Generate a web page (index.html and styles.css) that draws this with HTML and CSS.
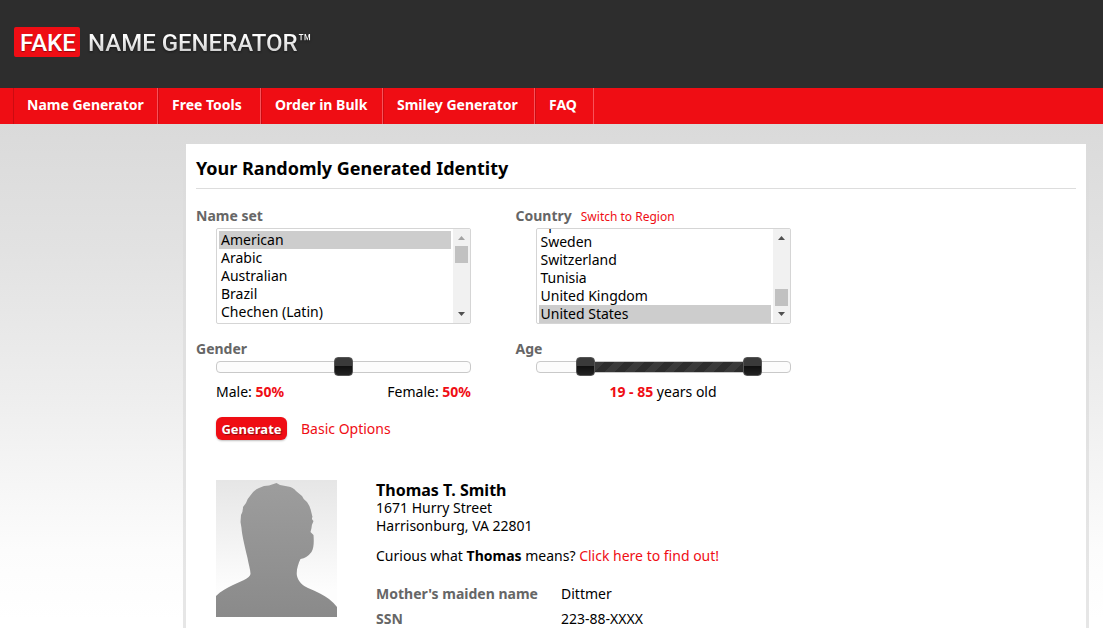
FILE: index.html
```html
<!DOCTYPE html>
<html lang="en">

<head>
    <meta charset="UTF-8">
    <meta name="viewport" content="width=device-width, initial-scale=1.0">
    <title>Fake Name Generator</title>
    <link rel="stylesheet" href="styles.css">
</head>

<body>
    <header>
        <a class="logo">
            <span class="logo-box"><span class="fake">FAKE</span></span>
            <span class="logo-text">NAME GENERATOR<span class="tm">™</span></span>
        </a>
    </header>
    <nav>
        <ul>
            <li class="nav-names"><a>Name Generator</a></li>
            <li class="nav-tools"><a>Free Tools</a></li>
            <li class="nav-bulk"><a>Order in Bulk</a></li>
            <li class="nav-smiley"><a>Smiley Generator</a></li>
            <li class="nav-faq"><a>FAQ</a></li>
        </ul>
    </nav>

    <main>
        <h1><span>Your Randomly Generated Identity</span></h1>

        <form class="options">
            <div class="option">
                <div class="label"><span class="l-nameset">Name set</span></div>
                <div class="listbox">
                    <ul>
                        <li class="selected">American</li>
                        <li>Arabic</li>
                        <li>Australian</li>
                        <li>Brazil</li>
                        <li>Chechen (Latin)</li>
                    </ul>
                    <div class="scrollbar">
                        <svg class="arrow disabled" viewBox="0 0 7 4"><path d="M0 4 3.5 0 7 4z"/></svg>
                        <div class="thumb"></div>
                        <svg class="arrow" viewBox="0 0 7 4"><path d="M0 0 3.5 4 7 0z"/></svg>
                    </div>
                </div>
            </div>
            <div class="option">
                <div class="label"><span class="l-country">Country</span><a class="region">Switch to Region</a></div>
                <div class="listbox scrolled">
                    <ul>
                        <li>Spain</li>
                        <li>Sweden</li>
                        <li>Switzerland</li>
                        <li>Tunisia</li>
                        <li>United Kingdom</li>
                        <li class="selected">United States</li>
                    </ul>
                    <div class="scrollbar">
                        <svg class="arrow" viewBox="0 0 7 4"><path d="M0 4 3.5 0 7 4z"/></svg>
                        <div class="thumb"></div>
                        <svg class="arrow" viewBox="0 0 7 4"><path d="M0 0 3.5 4 7 0z"/></svg>
                    </div>
                </div>
            </div>
            <div class="option">
                <div class="label"><span class="l-gender">Gender</span></div>
                <div class="slider">
                    <div class="handle middle"></div>
                </div>
                <div class="values">
                    <span class="v-male">Male: <b>50%</b></span>
                    <span class="v-female">Female: <b>50%</b></span>
                </div>
            </div>
            <div class="option">
                <div class="label"><span class="l-age">Age</span></div>
                <div class="slider">
                    <div class="range"></div>
                    <div class="handle min"></div>
                    <div class="handle max"></div>
                </div>
                <div class="values center">
                    <span class="v-age"><b>19 - 85</b> years old</span>
                </div>
            </div>
        </form>

        <div class="actions">
            <button type="button"><span>Generate</span></button>
            <a class="basic">Basic Options</a>
        </div>

        <div class="identity">
            <svg class="photo" viewBox="0 0 121 137">
                <defs>
                    <linearGradient id="photoBg" x1="0" y1="0" x2="0" y2="1">
                        <stop offset="0" stop-color="#e6e6e6"/>
                        <stop offset=".8" stop-color="#fdfdfd"/>
                    </linearGradient>
                    <linearGradient id="photoHead" x1="0" y1="0" x2="0" y2="1">
                        <stop offset="0" stop-color="#9d9d9d"/>
                        <stop offset="1" stop-color="#8a8a8a"/>
                    </linearGradient>
                </defs>
                <rect width="121" height="137" fill="url(#photoBg)"/>
                <path fill="url(#photoHead)" d="M0 116C5 111 11 108 17 105L28 100Q34 97 34.500 94C34.500 90 32.500 84 31.500 78C28 63 26 55 25.500 48L24.500 42L25 35Q27 32 27 27L30 23Q31 19 34 16Q38 10 43 8L48 6L53 5.500L60.500 3L64 5L72 6.500Q77 7 80 11L86 16Q87 19 91 22Q94 26 95 31L96.500 37Q95 39 97.500 41Q95.500 45 95.500 48L94.500 52L97.500 55C98 61 98 68 95.500 72Q91 78 84.500 79C82 84 80 91 81 96C82 101 87 106 92 108C101 112 108 115 113 119Q118 123 121 127V137H0z"/>
            </svg>
            <div class="info">
                <div class="address">
                    <h3><span>Thomas T. Smith</span></h3>
                    <div class="adr"><span class="street">1671 Hurry Street</span><br><span class="city">Harrisonburg, VA 22801</span></div>
                </div>
                <p class="curious">Curious what <b>Thomas</b> means? <a>Click here to find out!</a></p>
                <dl>
                    <dt class="maiden">Mother's maiden name</dt>
                    <dd>Dittmer</dd>
                </dl>
                <dl>
                    <dt>SSN</dt>
                    <dd>223-88-XXXX</dd>
                </dl>
            </div>
        </div>
    </main>
</body>

</html>
```
FILE: styles.css
```css
* {
    box-sizing: border-box;
}

html {
    height: 100%;
    overflow: hidden;
}

body {
    margin: 0;
    height: 100%;
    overflow: hidden;
    font-family: "Noto Sans", Tahoma, sans-serif;
    font-size: 14px;
    line-height: 18px;
    color: #000;
    background: linear-gradient(#dadada 124px, #e2e2e2 250px, #efefef 410px, #fcfcfc 550px, #fff 620px);
}

ul,
dl,
dd,
h1,
h3,
p {
    margin: 0;
    padding: 0;
    list-style: none;
}

a,
b {
    color: #ef0d14;
}

header {
    height: 88px;
    padding: 27px 0 0 14px;
    background: #2d2d2d;
}

.logo {
    display: flex;
    font: 500 24px/30px Roboto, sans-serif;
    white-space: nowrap;
}

.logo-box {
    width: 66px;
    height: 30px;
    padding-left: 6px;
    padding-top: 1px;
    border-radius: 2px;
    background: #ef0d14;
    margin-right: 8px;
}

.fake {
    color: #fff;
    text-shadow: 0 1px 1px rgba(0, 0, 0, .4);
}

.logo-text {
    padding-top: 1px;
    color: transparent;
    background: linear-gradient(#fff 8px, #ccc 26px);
    -webkit-background-clip: text;
    background-clip: text;
    filter: drop-shadow(0 1px 1px rgba(0, 0, 0, .5));
}

.tm {
    font-weight: 400;
}

nav {
    height: 36px;
    padding-left: 13px;
    background: #ef0d14;
}

nav ul {
    display: flex;
}

nav li {
    height: 36px;
    border-left: 1px solid #cb0b11;
    border-right: 1px solid #f8525a;
    padding-left: 13px;
    line-height: 34px;
    font-weight: bold;
    white-space: nowrap;
}

nav a {
    color: #fff;
}

.nav-names { width: 145px; }
.nav-tools { width: 103px; }
.nav-bulk { width: 122px; }
.nav-smiley { width: 152px; }
.nav-faq { width: 59px; }

main {
    width: 906px;
    height: 484px;
    margin: 20px 0 0 183px;
    padding: 0 10px;
    overflow: hidden;
    border: solid rgba(220, 220, 220, .7);
    border-width: 0 3px;
    background: #fff;
    background-clip: padding-box;
}

h1 {
    height: 45px;
    font-size: 18px;
    line-height: 49px;
    border-bottom: 1px solid #ddd;
}

.options {
    display: grid;
    grid-template-columns: 319.500px 320px;
    grid-template-rows: 133px 70px;
    padding-top: 17px;
}

.label {
    height: 22px;
    line-height: 19px;
    font-weight: bold;
    color: #666;
}

.region {
    margin-left: 9px;
    font-size: 12px;
    font-weight: normal;
}

.listbox {
    display: flex;
    justify-content: space-between;
    width: 255px;
    height: 96px;
    margin-left: 20px;
    border: 1px solid #d5d5d5;
    border-radius: 2px;
    overflow: hidden;
}

.listbox ul {
    display: flex;
    flex-direction: column;
    width: 234px;
    height: 94px;
    padding: 2px 0 0 2px;
}

.listbox li {
    flex: none;
    height: 18px;
    padding-left: 2px;
    line-height: 18px;
}

.listbox .selected {
    background: #cdcdcd;
}

.scrolled ul {
    padding-top: 0;
    justify-content: flex-end;
}

.scrollbar {
    display: flex;
    flex-direction: column;
    align-items: center;
    width: 17px;
    padding: 7px 0;
    background: #f1f1f1;
}

.arrow {
    width: 7px;
    height: 4px;
    fill: #505050;
}

.arrow.disabled {
    fill: #a3a3a3;
}

.thumb {
    width: 13px;
    height: 17px;
    margin: 6px 0 auto;
    background: #c1c1c1;
}

.scrolled .thumb {
    margin: auto 0 6px;
}

.slider {
    position: relative;
    width: 255px;
    height: 12px;
    margin: 0 0 0 20px;
    border: 1px solid #c9c9c9;
    border-radius: 4px;
    background: #fcfcfc;
}

.handle {
    position: absolute;
    top: -5px;
    width: 19px;
    height: 19px;
    border: 1px solid #555;
    border-radius: 4px;
    background: linear-gradient(#3a3a3a 45%, #111 50%, #222);
}

.handle.middle { left: 117px; }
.handle.min { left: 39px; }
.handle.max { left: 206px; }

.range {
    position: absolute;
    left: 48px;
    top: 0;
    width: 167px;
    height: 10px;
    background: repeating-linear-gradient(135deg, #2d2d2d 0 7px, #3a3a3a 7px 14px);
}

.values {
    display: flex;
    justify-content: space-between;
    width: 255px;
    margin: 10px 0 0 20px;
    white-space: nowrap;
}

.values.center {
    justify-content: center;
}

.actions {
    display: flex;
    align-items: center;
    height: 23px;
    margin: 8px 0 0 20px;
}

button {
    width: 71px;
    height: 23px;
    margin-right: 14px;
    padding: 0;
    border: 0;
    border-radius: 6px;
    font: bold 13px/22px "Noto Sans", Tahoma, sans-serif;
    color: #fff;
    background: #ef0d14;
    box-shadow: 0 1px 2px rgba(0, 0, 0, .25);
    text-shadow: 1px 1px 1px rgba(0, 0, 0, .4);
}

.identity {
    display: flex;
    margin: 40px 0 0 20px;
}

.photo {
    width: 121px;
    height: 137px;
}

.info {
    margin-left: 39px;
    padding-top: 1px;
}

h3 {
    font-size: 16px;
    line-height: 18px;
}

.curious {
    margin: 12px 0 16px;
}

.curious b {
    color: #000;
}

dl {
    display: flex;
    height: 25px;
    line-height: 25px;
}

dt {
    width: 185px;
    font-weight: bold;
    color: #666;
}
```
